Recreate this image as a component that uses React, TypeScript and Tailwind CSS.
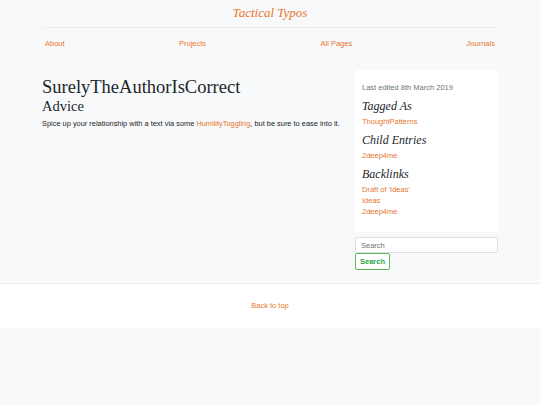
import React from "react";

const serif = { fontFamily: '"Liberation Serif", Georgia, serif' };

export default function App() {
  return (
    <div className="min-h-[405px] bg-[#f8f9fa] text-[#212529]" style={{ fontFamily: '"Liberation Sans", Arial, sans-serif' }}>
      <div className="px-[42px]">
        <header className="flex h-[28px] items-center justify-center border-b border-[#ebedef] pb-[2px]">
          <a className="text-[13px] italic text-[#e8772e]" style={serif}>Tactical Typos</a>
        </header>
        <nav className="flex h-[32px] items-center justify-between px-[3px] text-[7.5px] text-[#e8772e]">
          <a>About</a>
          <a>Projects</a>
          <a>All Pages</a>
          <a>Journals</a>
        </nav>
        <div className="mt-[10px] flex gap-[14px]">
          <main className="min-w-0 flex-1 pt-[6px]">
            <h1 className="text-[18.5px] leading-[22px]" style={serif}>SurelyTheAuthorIsCorrect</h1>
            <h2 className="text-[14.5px] leading-[17px]" style={serif}>Advice</h2>
            <p className="mt-[4px] whitespace-nowrap text-[7.42px] leading-[10px]">
              Spice up your relationship with a text via some <a className="text-[#e8772e]">HumilityToggling</a>, but be sure to ease into it.
            </p>
          </main>
          <aside className="w-[143px] shrink-0">
            <div className="bg-white px-[7px] pb-[15px] pt-[13px]">
              <p className="text-[7.5px] leading-[10px] text-[#6c757d]">Last edited 8th March 2019</p>
              <h3 className="mt-[6px] text-[12px] italic leading-[14px]" style={serif}>Tagged As</h3>
              <div className="mt-[3px] flex flex-col text-[7.5px] leading-[11px] text-[#e8772e]">
                <a>ThoughtPatterns</a>
              </div>
              <h3 className="mt-[6px] text-[12px] italic leading-[14px]" style={serif}>Child Entries</h3>
              <div className="mt-[3px] flex flex-col text-[7.5px] leading-[11px] text-[#e8772e]">
                <a>2deep4me</a>
              </div>
              <h3 className="mt-[6px] text-[12px] italic leading-[14px]" style={serif}>Backlinks</h3>
              <div className="mt-[3px] flex flex-col text-[7.5px] leading-[11px] text-[#e8772e]">
                <a>Draft of 'Ideas'</a>
                <a>Ideas</a>
                <a>2deep4me</a>
              </div>
            </div>
            <div className="mt-[5px] flex flex-col items-start">
              <input
                placeholder="Search"
                className="h-[16px] w-full rounded-[2px] border border-[#dee2e6] bg-white px-[5px] text-[7.5px] placeholder:text-[#6c757d] outline-none"
              />
              <button className="h-[17px] rounded-[2px] border border-[#5cb85c] bg-white px-[4px] text-[7.5px] font-bold text-[#28a745]">
                Search
              </button>
            </div>
          </aside>
        </div>
      </div>
      <footer className="mt-[13px] flex h-[45px] items-center justify-center border-t border-[#ebedef] bg-white">
        <a className="text-[7.5px] text-[#e8772e]">Back to top</a>
      </footer>
    </div>
  );
}
